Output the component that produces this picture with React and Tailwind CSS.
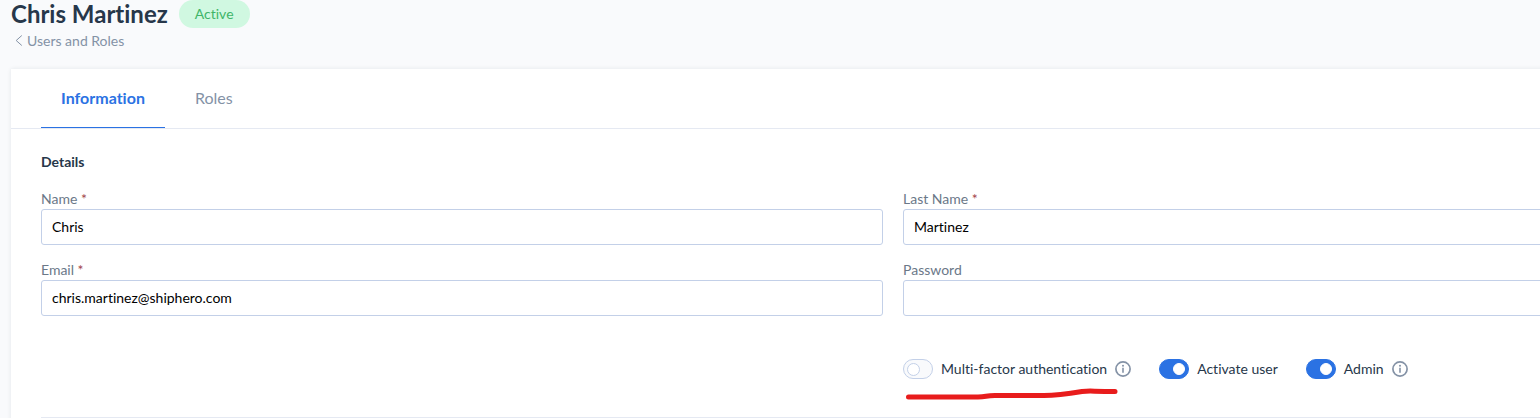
function Field({ id, label, required, type = "text", value }) {
  return (
    <div className="flex flex-col">
      <label htmlFor={id} className="text-sm leading-5 text-[#6b7888]">
        {label}
        {required && <span className="text-[#a2454b]"> *</span>}
      </label>
      <input
        id={id}
        type={type}
        defaultValue={value}
        className="h-9 w-full rounded-[3px] border border-[#c3d0e8] bg-white px-2.5 pb-0.5 text-sm text-black outline-none"
      />
    </div>
  );
}

function InfoIcon() {
  return (
    <svg className="h-4 w-4 text-[#8492a6]" viewBox="0 0 16 16" fill="none" aria-hidden="true">
      <circle cx="8" cy="8" r="7.1" stroke="currentColor" strokeWidth="1.7" />
      <path d="M8 6.8v5" stroke="currentColor" strokeWidth="1.6" />
      <circle cx="8" cy="4.7" r="1" fill="currentColor" />
    </svg>
  );
}

function Toggle({ id, label, checked, info }) {
  return (
    <div className="flex h-5 shrink-0 items-center">
      <input
        id={id}
        type="checkbox"
        defaultChecked={checked}
        className="flex h-5 w-[30px] appearance-none items-center rounded-full border border-[#c3d0e8] bg-[#f9fafc] px-[3px] before:h-[13px] before:w-[13px] before:rounded-full before:border before:border-[#c3d0e8] before:bg-white checked:justify-end checked:border-[#2b72e3] checked:bg-[#2b72e3] checked:before:h-3 checked:before:w-3 checked:before:border-white"
      />
      <label htmlFor={id} className="pl-2 text-sm leading-5 whitespace-nowrap text-[#27374a]">
        {label}
      </label>
      {info && (
        <span className="pl-2">
          <InfoIcon />
        </span>
      )}
    </div>
  );
}

export default function App() {
  return (
    <div className="min-h-screen overflow-hidden bg-[#f9fafc] pl-[11px] font-['Lato',sans-serif] [font-variant-ligatures:none]">
      <header className="flex h-7 items-center gap-[11px]">
        <h1 className="text-2xl leading-7 font-bold text-[#27374a]">Chris Martinez</h1>
        <span className="flex h-7 items-center rounded-full bg-[#d0f8e1] px-4 text-sm text-[#3fb568]">
          Active
        </span>
      </header>
      <a href="#users" className="mt-[3px] flex w-fit items-center gap-1 pl-1 text-sm leading-5 text-[#8492a6]">
        <svg className="h-3 w-2" viewBox="0 0 8 12" fill="none" stroke="currentColor" aria-hidden="true">
          <path d="M6.8 0.5 1.2 5.5l5.6 5" />
        </svg>
        Users and Roles
      </a>

      {/* the card runs past the right edge of the window */}
      <main className="mt-[18px] -mr-[235px] min-h-[360px] bg-white shadow-[0_0_4px_rgba(39,55,74,0.1)]">
        <nav className="flex h-[60px] border-b border-[#e5e9f2] px-[30px] text-base">
          <button type="button" className="w-[124px] border-b border-[#2b72e3] font-bold text-[#2b72e3]">
            Information
          </button>
          <button type="button" className="border-b border-transparent px-[30px] text-[#8492a6]">
            Roles
          </button>
        </nav>

        <form className="px-[30px] pt-[23px]">
          <h2 className="text-sm leading-5 font-bold text-[#27374a]">Details</h2>
          <div className="mt-[17px] grid grid-cols-2 gap-x-5 gap-y-[15px]">
            <Field id="name" label="Name" required value="Chris" />
            <Field id="last-name" label="Last Name" required value="Martinez" />
            <Field id="email" label="Email" required value="chris.martinez@shiphero.com" />
            <Field id="password" label="Password" type="password" />
            <div className="relative col-start-2 mt-7 flex gap-7">
              <Toggle id="mfa" label="Multi-factor authentication" info />
              <Toggle id="active" label="Activate user" checked />
              <Toggle id="admin" label="Admin" checked info />
              {/* hand-drawn marker line */}
              <svg
                className="pointer-events-none absolute top-7 left-0 h-4 w-[220px]"
                viewBox="0 0 220 16"
                fill="none"
                aria-hidden="true"
              >
                <path
                  d="M5.5 10H75C84 10 82 8.5 92 8.5h49c13 0 26-2 38-4 9-1 9 0 33 0"
                  stroke="#e81c1c"
                  strokeWidth="5"
                  strokeLinecap="round"
                  strokeLinejoin="round"
                />
              </svg>
            </div>
          </div>
          <hr className="mt-[38px] border-[#e5e9f2]" />
        </form>
      </main>
    </div>
  );
}
